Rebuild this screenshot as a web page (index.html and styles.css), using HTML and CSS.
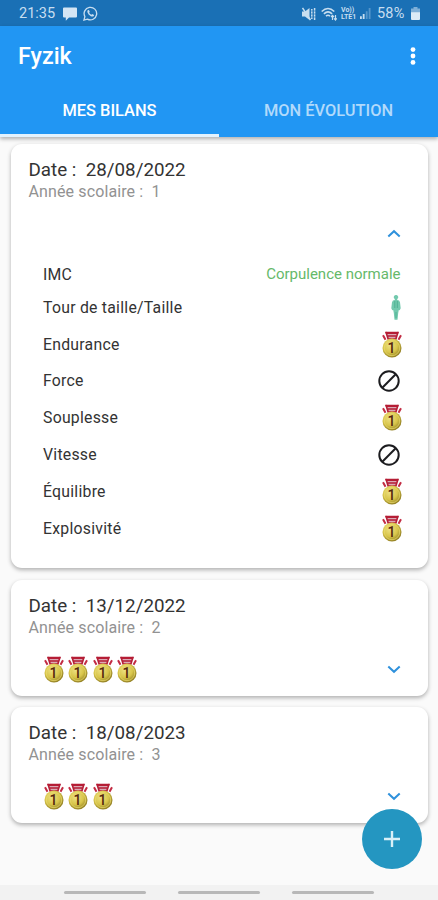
FILE: index.html
```html
<!DOCTYPE html>
<html lang="fr">
<head>
<meta charset="utf-8">
<title>Fyzik</title>
<link rel="stylesheet" href="styles.css">
</head>
<body>
<svg class="defs" aria-hidden="true">
  <defs>
    <radialGradient id="gold" cx="40%" cy="35%" r="65%">
      <stop offset="0" stop-color="#eee184"/>
      <stop offset=".6" stop-color="#d8c54a"/>
      <stop offset="1" stop-color="#958224"/>
    </radialGradient>
    <symbol id="medal" viewBox="0 0 20 27">
      <path d="M3 .8h14l-1.200 2.400H4.200z" fill="#b51d35"/>
      <path d="M5.500 3h9l-.8 5H6.300z" fill="#dba9b5"/>
      <path d="M4 1l2.300 7.500M16 1l-2.300 7.500M6 5h8M6.200 8h7.600" fill="none" stroke="#b51d35" stroke-width="1.700"/>
      <path d="M1 4.200l2.500 4.500M19 4.200l-2.500 4.500" stroke="#c22b42" stroke-width="2"/>
      <circle cx="10" cy="17" r="9.500" fill="url(#gold)"/>
      <circle cx="10" cy="17" r="7.700" fill="none" stroke="#eadb70" stroke-width=".7"/>
      <text x="9.600" y="22" class="medal-number">1</text>
    </symbol>
    <symbol id="banned" viewBox="0 0 24 24">
      <circle cx="12" cy="12" r="9.700" fill="none" stroke="#1c1c1f" stroke-width="2"/>
      <path d="M5.300 18.700L18.700 5.300" stroke="#1c1c1f" stroke-width="2"/>
    </symbol>
    <symbol id="down" viewBox="0 0 14 9">
      <path d="M1.300 1.400L7 6.800l5.700-5.400" fill="none" stroke="#2e91dc" stroke-width="2"/>
    </symbol>
  </defs>
</svg>

<div class="phone">
  <div class="status">
    <span class="clock">21:35</span>
    <svg class="chat" viewBox="0 0 14 14"><path d="M1 .5h12q1 0 1 1v8q0 1-1 1H6L2.800 13.700V10.500H1q-1 0-1-1v-8q0-1 1-1z" fill="#d3e5f4"/></svg>
    <svg class="whatsapp" viewBox="0 0 16 16"><path d="M1 15l1-3.700A6.700 6.700 0 1 1 4.700 14z" fill="none" stroke="#c7def0" stroke-width="1.400"/><path d="M5 4.500l1.300-.3.900 2-.7.900q.9 1.700 2.500 2.300l.9-.9 1.900 1-.3 1.200q-1.200 1.100-3.200.1Q5.500 9.300 4.800 7q-.5-1.500.2-2.500z" fill="#c7def0"/></svg>
    <span class="spacer"></span>
    <svg class="mute" viewBox="0 0 14 14"><path d="M0 4.500h3L7.500 1v12L3 9.500H0z" fill="#c7def0"/><path d="M.5 1l8 12M9.800 2v10M12.600 1v12" fill="none" stroke="#c7def0" stroke-width="1.500"/><path d="M9 4h5M9 7h5M9 10h5" stroke="#1a70b5" stroke-width=".7"/></svg>
    <svg class="wifi" viewBox="0 0 16 14"><path d="M.7 4.500Q7 -1.500 13.300 4.500M2.900 6.900Q7 3 11.100 6.900M5 9.200Q7 7.300 9 9.200" fill="none" stroke="#c7def0" stroke-width="1.600"/><path d="M11.500 13V8.500M14.500 8v4.500M10 10l1.500-1.700L13 10M13 11.300l1.500 1.700 1.300-1.700" fill="none" stroke="#c7def0" stroke-width="1.200"/></svg>
    <span class="lte"><span>Vo))</span><span>LTE1</span></span>
    <svg class="signal" viewBox="0 0 12 12"><path d="M1 9v3M4 6.500V12" stroke="#c7def0" stroke-width="2"/><path d="M7.300 3.500V12M10.500 0v12" stroke="#5596cb" stroke-width="2"/></svg>
    <span class="percent">58%</span>
    <svg class="battery" viewBox="0 0 9 13"><path d="M2.500 0h4v1.500H9V6H0V1.500h2.500z" fill="#7fb0d8"/><path d="M0 5.300h9V12q0 1-1 1H1q-1 0-1-1z" fill="#dcebf6"/></svg>
  </div>

  <header class="appbar">
    <div class="toolbar">
      <h1>Fyzik</h1>
      <svg class="more" viewBox="0 0 6 18"><g fill="#fff"><circle cx="3" cy="2.600" r="2.400"/><circle cx="3" cy="9" r="2.400"/><circle cx="3" cy="15.400" r="2.400"/></g></svg>
    </div>
    <nav class="tabs">
      <a class="tab active">MES BILANS</a>
      <a class="tab">MON ÉVOLUTION</a>
    </nav>
  </header>

  <main class="list">
    <section class="card open">
      <h2>Date :&nbsp; 28/08/2022</h2>
      <p class="year">Année scolaire :&nbsp; 1</p>
      <div class="toggle"><svg class="chevron up"><use href="#down"/></svg></div>
      <ul class="results">
        <li class="first"><span>IMC</span><span class="normal">Corpulence normale</span></li>
        <li><span>Tour de taille/Taille</span><svg class="person" viewBox="0 0 10 25"><path d="M5 0a2.100 2.100 0 0 1 1.200 3.900V5q2.300 0 2.800 2.200l.7 6-1 2-.9-.2-.6 3-.7 6.700H3.500L2.800 18l-.6-3-.9.200-1-2 .7-6Q1.500 5 3.800 5V3.900A2.100 2.100 0 0 1 5 0z" fill="#73c9ae"/><path d="M3.800 6v7M6.300 6v7M5 17v6" stroke="#46ac8d" stroke-width=".8"/></svg></li>
        <li><span>Endurance</span><svg class="medal"><use href="#medal"/></svg></li>
        <li><span>Force</span><svg class="banned"><use href="#banned"/></svg></li>
        <li><span>Souplesse</span><svg class="medal"><use href="#medal"/></svg></li>
        <li><span>Vitesse</span><svg class="banned"><use href="#banned"/></svg></li>
        <li><span>Équilibre</span><svg class="medal"><use href="#medal"/></svg></li>
        <li><span>Explosivité</span><svg class="medal"><use href="#medal"/></svg></li>
      </ul>
    </section>

    <section class="card">
      <h2>Date :&nbsp; 13/12/2022</h2>
      <p class="year">Année scolaire :&nbsp; 2</p>
      <div class="summary">
        <div class="medals">
          <svg class="medal"><use href="#medal"/></svg>
          <svg class="medal"><use href="#medal"/></svg>
          <svg class="medal"><use href="#medal"/></svg>
          <svg class="medal"><use href="#medal"/></svg>
        </div>
        <svg class="chevron"><use href="#down"/></svg>
      </div>
    </section>

    <section class="card">
      <h2>Date :&nbsp; 18/08/2023</h2>
      <p class="year">Année scolaire :&nbsp; 3</p>
      <div class="summary">
        <div class="medals">
          <svg class="medal"><use href="#medal"/></svg>
          <svg class="medal"><use href="#medal"/></svg>
          <svg class="medal"><use href="#medal"/></svg>
        </div>
        <svg class="chevron"><use href="#down"/></svg>
      </div>
    </section>
  </main>

  <button class="fab" aria-label="Ajouter"><svg viewBox="0 0 16 16"><path d="M8 0v16M0 8h16" stroke="#d9f0f7" stroke-width="2.400"/></svg></button>

  <footer class="navbar"><i></i><i></i><i></i></footer>
</div>
</body>
</html>
```

FILE: styles.css
```css
* {
  box-sizing: border-box;
}

body,
h1,
h2,
p,
ul {
  margin: 0;
  padding: 0;
}

body {
  font-family: Roboto, "Liberation Sans", sans-serif;
  background: #fafafa;
}

svg {
  display: block;
  flex: none;
}

.defs {
  position: absolute;
  width: 0;
  height: 0;
}

.phone {
  position: relative;
  display: flex;
  flex-direction: column;
  width: 438px;
  height: 900px;
  overflow: hidden;
  background: #fafafa;
}

.status {
  display: flex;
  align-items: center;
  flex: none;
  height: 26px;
  padding: 1px 18px 0 19px;
  background: #1a70b5;
  color: #c7def0;
}

.clock,
.percent {
  font-size: 14.5px;
  line-height: 26px;
}

.clock {
  width: 44px;
}

.chat {
  width: 14px;
  height: 14px;
}

.whatsapp {
  width: 15px;
  height: 15px;
  margin-left: 6px;
}

.spacer {
  flex: 1;
}

.mute {
  width: 14px;
  height: 14px;
}

.wifi {
  width: 16px;
  height: 14px;
  margin-left: 5px;
}

.lte {
  display: flex;
  flex-direction: column;
  width: 17px;
  margin-left: 4px;
  font-size: 7px;
  font-weight: 700;
  line-height: 7px;
}

.signal {
  width: 11px;
  height: 11px;
  margin-left: 2px;
}

.percent {
  width: 29px;
  margin: 0 5px 0 6px;
  letter-spacing: .2px;
}

.battery {
  width: 9px;
  height: 13px;
}

.appbar {
  position: relative;
  z-index: 1;
  flex: none;
  height: 111px;
  background: #2196f3;
  box-shadow: 0 2px 4px rgba(0, 0, 0, .3);
}

.toolbar {
  display: flex;
  align-items: center;
  justify-content: space-between;
  height: 59px;
  padding: 0 22px 0 18px;
}

h1 {
  color: #fff;
  font-size: 23.3px;
  font-weight: 500;
  line-height: 28px;
}

.more {
  width: 6px;
  height: 18px;
}

.tabs {
  display: flex;
  height: 52px;
}

.tab {
  flex: 1;
  padding-top: 2px;
  border-bottom: 3px solid transparent;
  color: #b2dafb;
  font-size: 16.4px;
  font-weight: 500;
  line-height: 48px;
  text-align: center;
}

.tab.active {
  border-color: #e3f2fd;
  color: #fff;
}

.list {
  display: flex;
  flex: 1;
  flex-direction: column;
  gap: 11.5px;
  padding: 7px 10px 0 11px;
}

.card {
  flex: none;
  height: 116px;
  padding: 15px 26px 0 17.5px;
  border-radius: 11px;
  background: #fff;
  box-shadow: 0 2px 4px rgba(0, 0, 0, .3);
}

.card.open {
  height: 424px;
}

h2 {
  color: #333;
  font-size: 18.8px;
  font-weight: 400;
  line-height: 22px;
}

.year {
  color: #929292;
  font-size: 16px;
  line-height: 22px;
  letter-spacing: .12px;
}

.toggle {
  display: flex;
  align-items: center;
  justify-content: flex-end;
  height: 56px;
  padding-top: 5px;
}

.chevron {
  width: 14px;
  height: 9px;
  margin-right: 1.5px;
}

.chevron.up {
  transform: rotate(180deg);
}

.results {
  padding-left: 14.5px;
  list-style: none;
  color: #333;
  font-size: 15.8px;
  letter-spacing: .25px;
}

.results li {
  display: flex;
  align-items: center;
  justify-content: space-between;
  height: 36.8px;
}

.results .first {
  height: 30px;
}

.normal {
  margin-right: 1.5px;
  color: #66b96a;
  font-size: 15px;
  letter-spacing: 0;
}

.person {
  width: 10px;
  height: 25px;
  margin-right: 1.5px;
}

.medal {
  width: 20px;
  height: 27px;
}

.results .medal {
  margin-right: .5px;
}

.medal-number {
  fill: #55250d;
  font: 500 14px Roboto, "Liberation Sans", sans-serif;
  text-anchor: middle;
}

.banned {
  width: 24px;
  height: 24px;
  margin-right: 1.5px;
}

.summary {
  display: flex;
  align-items: center;
  justify-content: space-between;
  height: 27px;
  margin-top: 17.3px;
  padding-left: 15px;
}

.medals {
  display: flex;
  gap: 4.5px;
}

.fab {
  position: absolute;
  right: 16px;
  bottom: 31px;
  display: flex;
  align-items: center;
  justify-content: center;
  width: 60px;
  height: 60px;
  padding: 0;
  border: 0;
  border-radius: 50%;
  background: #2496c1;
}

.fab svg {
  width: 16px;
  height: 16px;
}

.navbar {
  display: flex;
  flex: none;
  justify-content: center;
  gap: 32px;
  height: 15px;
  padding-top: 6px;
  background: #f2f2f2;
}

.navbar i {
  width: 82px;
  height: 3px;
  border-radius: 2px;
  background: #b8b8b8;
}
```
